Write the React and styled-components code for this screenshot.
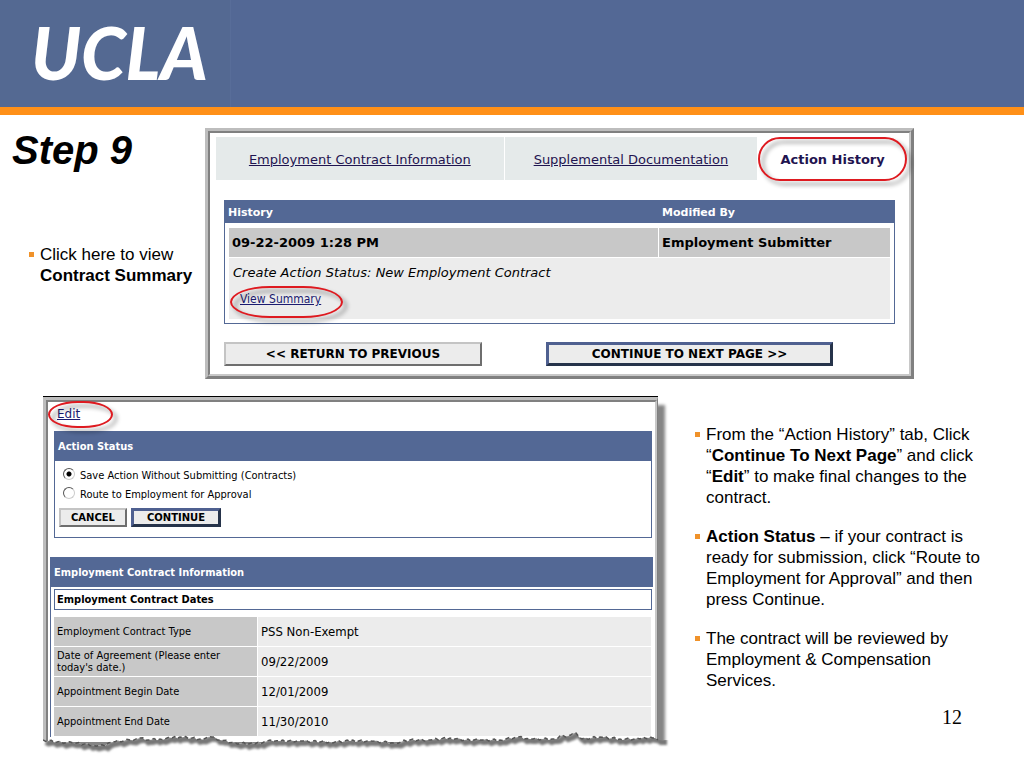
import styled, { createGlobalStyle, css } from 'styled-components';

const GlobalStyle = createGlobalStyle`
  * {
    box-sizing: border-box;
  }
  body {
    margin: 0;
    background: #fff;
    color: #000;
    font-family: "Liberation Sans", Arial, sans-serif;
  }
`;

const formFont = '"DejaVu Sans Condensed", Tahoma, "DejaVu Sans", sans-serif';
const wideFont = '"DejaVu Sans", Verdana, sans-serif';
const blue = '#536895';

const Header = styled.header`
  display: flex;
  height: 115px;
  background: ${blue};
  border-bottom: 8px solid #ff9018;
`;

const Brand = styled.div`
  width: 231px;
  padding-left: 31px;
  background: #546992;
  border-right: 1px solid #586d99;
  color: #fff;
  font: italic 900 72px/104px Lato, sans-serif;
`;

const TopSection = styled.section`
  display: grid;
  grid-template-columns: 205px minmax(0, 1fr);
  padding: 13px 110px 0 0;
`;

const StepTitle = styled.h1`
  margin: 0 0 72px 12px;
  font: italic bold 40px/44px "Liberation Sans", Arial, sans-serif;
`;

const Notes = styled.ul`
  display: flex;
  flex-direction: column;
  gap: 18px;
  margin: 0;
  padding: 0 0 0 ${({ $indent }) => $indent}px;
  list-style: none;
  font-size: 17px;
  line-height: 21px;
`;

const Note = styled.li`
  display: grid;
  grid-template-columns: 11px minmax(0, 1fr);

  &::before {
    content: '';
    width: 5px;
    height: 5px;
    margin-top: 8px;
    background: #f0922a;
  }
`;

const Frame = styled.div`
  border: 3px solid;
  border-color: #bdbdbd #808080 #808080 #bdbdbd;
`;

const FrameInner = styled.div`
  border: 2px solid;
  border-color: #808080 #c8c8c8 #c8c8c8 #808080;
  padding: ${({ $padding }) => $padding};
`;

const Tabs = styled.nav`
  display: flex;
  gap: 1px;
  margin-bottom: 20px;
`;

const Tab = styled.a`
  flex: ${({ $grow }) => $grow} 1 0;
  height: 43px;
  background: ${({ $active }) => ($active ? '#fff' : '#e5eaea')};
  color: #1f1450;
  font: ${({ $active }) => ($active ? 'bold' : 'normal')} 13px/45px ${wideFont};
  text-align: center;
  text-decoration: ${({ $active }) => ($active ? 'none' : 'underline')};
  white-space: nowrap;
`;

const ringed = css`
  position: relative;

  &::after {
    content: '';
    position: absolute;
    border: 2px solid #de1a20;
    border-radius: 50px;
    filter: drop-shadow(4px 4px 2px rgba(0, 0, 0, 0.45));
    pointer-events: none;
  }
`;

const RingedTab = styled(Tab)`
  ${ringed}
  &::after {
    inset: 0 0 -1px;
  }
`;

const SummaryLink = styled.a`
  ${ringed}
  margin-left: 7px;
  color: #1b1b70;
  font: 12px/16px ${formFont};

  &::after {
    inset: -6px -22px -12px -10px;
    border-radius: 35%/50%;
  }
`;

const EditLink = styled.a`
  ${ringed}
  display: inline-block;
  margin-left: 8px;
  color: #1b1b70;
  font: 12px/16px ${wideFont};

  &::after {
    inset: -5px -33px -6px -9px;
    border-radius: 45%/50%;
  }
`;

const HistoryArea = styled.div`
  padding: 0 12px 0 8px;
`;

const HistoryTable = styled.table`
  width: 100%;
  border: 1px solid ${blue};
  border-top: 0;
  border-spacing: 0;
  table-layout: fixed;
`;

const HistoryHead = styled.th`
  height: 23px;
  padding: 2px 4px 0 3px;
  background: ${blue};
  color: #fff;
  font: bold 11px/20px ${wideFont};
  text-align: left;

  &:first-child {
    width: 434px;
  }
`;

const HistoryCell = styled.td`
  height: 34px;
  padding: 0 3px;
  background: #c8c8c8;
  border-top: 5px solid #fff;
  border-right: ${({ $last }) => ($last ? 4 : 1)}px solid #fff;
  border-left: ${({ $last }) => ($last ? 0 : 4)}px solid #fff;
  font: bold 13px/20px ${wideFont};
`;

const HistoryDetail = styled.td`
  height: 66px;
  padding: 6px 4px 4px;
  background: #ececec;
  border: 4px solid #fff;
  border-top-width: 1px;
  font: italic 13px/18px ${wideFont};
  vertical-align: top;
`;

const DetailText = styled.p`
  margin: 0 0 8px;
`;

const ButtonRow = styled.div`
  display: flex;
  gap: ${({ $gap }) => $gap}px;
  margin: ${({ $margin }) => $margin};
`;

const FormButton = styled.button`
  width: ${({ $width }) => $width}px;
  height: ${({ $tall }) => ($tall ? 24 : 19)}px;
  padding: 0;
  background: #ececec;
  border: 2px solid;
  border-color: #c4c4c4 #6e6e6e #6e6e6e #c4c4c4;
  color: #000;
  font: bold ${({ $tall }) => ($tall ? 12 : 10)}px/14px ${wideFont};
  white-space: nowrap;

  ${({ $primary }) =>
    $primary &&
    css`
      border-color: #4f6090 #26334a #26334a #4f6090;
      border-width: 3px;
    `}
`;

const BottomSection = styled.section`
  display: grid;
  grid-template-columns: minmax(0, 1fr) 366px;
  padding: 17px 0 8px 43px;
`;

const TornSheet = styled.div`
  position: relative;
  height: 362px;
  border-top: 1px solid #000;
`;

const SheetBody = styled(Frame)`
  height: 345px;
  border-width: 3px 1px 0 3px;
  box-shadow: 8px 7px 3px -1px #858585;
`;

const SheetInner = styled(FrameInner)`
  height: 100%;
  border-bottom: 0;
  background: #fff;
`;

const TornEdge = styled.svg`
  position: absolute;
  left: 0;
  bottom: 0;
  width: calc(100% + 14px);
  height: 28px;
`;

const Bar = styled.h2`
  margin: 0;
  height: 30px;
  padding-left: 3px;
  background: ${blue};
  color: #fff;
  font: bold 11px/32px ${formFont};
`;

const StatusBox = styled.form`
  margin: 9px 3px 19px 5px;
  height: 107px;
  border: 1px solid ${blue};
  border-top: 0;
`;

const Choices = styled.div`
  padding: 5px 0 0 8px;
`;

const Choice = styled.label`
  display: flex;
  align-items: center;
  gap: 5px;
  height: 19px;
  font: 11px/14px ${formFont};
`;

const Radio = styled.input`
  appearance: none;
  width: 12px;
  height: 12px;
  margin: 0 0 4px;
  border: 1px solid;
  border-color: #555 #ccc #ccc #555;
  border-radius: 50%;
  background: #fff;

  &:checked {
    background: radial-gradient(circle, #000 0 2px, #fff 3px);
  }
`;

const ContractBox = styled.div`
  margin: 0 2px 0 1px;
  border-left: 1px solid ${blue};
`;

const SubTitle = styled.h3`
  margin: 2px 1px 6px 3px;
  height: 21px;
  padding-left: 2px;
  border: 1px solid ${blue};
  font: bold 11px/20px ${formFont};
`;

const DatesTable = styled.table`
  width: calc(100% - 5px);
  margin-left: 3px;
  border-spacing: 0 1px;
  table-layout: fixed;
`;

const DateLabel = styled.th`
  width: 204px;
  height: 29px;
  padding: 1px 24px 0 3px;
  background: #c8c8c8;
  border-right: 1px solid #fff;
  font: 11px/12px ${formFont};
  text-align: left;
`;

const DateValue = styled.td`
  padding: 1px 3px 0;
  background: #ececec;
  font: 13px/16px ${formFont};
`;

const SideColumn = styled.div`
  display: flex;
  flex-direction: column;
  justify-content: space-between;
  padding: 28px 40px 29px 0;
`;

const PageNumber = styled.div`
  padding-right: 22px;
  font: 20px/24px "Liberation Serif", "Times New Roman", serif;
  text-align: right;
`;

const dates = [
  ['Employment Contract Type', 'PSS Non-Exempt'],
  ["Date of Agreement (Please enter today's date.)", '09/22/2009'],
  ['Appointment Begin Date', '12/01/2009'],
  ['Appointment End Date', '11/30/2010'],
];

// x, y pairs along the ripped bottom of the sheet
const tear = [
  [0, 10], [14, 12], [30, 13], [50, 15], [62, 16], [69, 12], [87, 10], [97, 8], [105, 10],
  [117, 9], [129, 8], [137, 7], [157, 9], [169, 7], [177, 10], [192, 13], [212, 14], [221, 12],
  [227, 10], [237, 11], [257, 11], [287, 12], [307, 11], [327, 11], [352, 13], [367, 10],
  [387, 10], [407, 8], [422, 10], [437, 10], [457, 10], [475, 7], [487, 9], [512, 9], [517, 6],
  [525, 6], [533, 3], [539, 9], [557, 7], [577, 9], [597, 9], [607, 7], [615, 10],
];

const jagged = () => {
  const points = [];
  tear.slice(0, -1).forEach(([x, y], i) => {
    const [nx, ny] = tear[i + 1];
    const steps = Math.max(1, Math.round((nx - x) / 3));
    for (let s = 0; s < steps; s += 1) {
      const bump = s === 0 ? 0 : ((i * 7 + s * 5) % 3) - 1;
      points.push(`${x + ((nx - x) * s) / steps} ${y + ((ny - y) * s) / steps + bump}`);
    }
  });
  points.push('615 10');
  return points.join(' L');
};

const Tear = () => {
  const line = jagged();
  return (
    <TornEdge viewBox="0 0 629 28" preserveAspectRatio="none" aria-hidden="true">
      <defs>
        <clipPath id="below">
          <path d={`M${line} L629 10 V28 H0 Z`} />
        </clipPath>
        <filter id="soft" x="-5%" y="-80%" width="110%" height="300%">
          <feGaussianBlur stdDeviation="1.3" />
        </filter>
      </defs>
      <g clipPath="url(#below)">
        <rect width="629" height="28" fill="#fff" />
        <path d={`M${line} L621 10`} transform="translate(3 2)" fill="none" stroke="#777" strokeWidth="6" filter="url(#soft)" />
      </g>
      <path d={`M${line}`} fill="none" stroke="#555" strokeWidth="1.5" strokeDasharray="4 3" />
    </TornEdge>
  );
};

const HistoryPanel = () => (
  <Frame>
    <FrameInner $padding="4px 2px 8px 6px">
      <Tabs>
        <Tab href="#contract" $grow={288}>Employment Contract Information</Tab>
        <Tab href="#documents" $grow={253}>Supplemental Documentation</Tab>
        <RingedTab href="#history" $grow={149} $active>Action History</RingedTab>
      </Tabs>
      <HistoryArea>
        <HistoryTable>
          <thead>
            <tr>
              <HistoryHead>History</HistoryHead>
              <HistoryHead>Modified By</HistoryHead>
            </tr>
          </thead>
          <tbody>
            <tr>
              <HistoryCell>09-22-2009 1:28 PM</HistoryCell>
              <HistoryCell $last>Employment Submitter</HistoryCell>
            </tr>
            <tr>
              <HistoryDetail colSpan={2}>
                <DetailText>Create Action Status: New Employment Contract</DetailText>
                <SummaryLink href="#summary">View Summary</SummaryLink>
              </HistoryDetail>
            </tr>
          </tbody>
        </HistoryTable>
        <ButtonRow $gap={64} $margin="18px 0 0">
          <FormButton type="button" $width={258} $tall>&lt;&lt; RETURN TO PREVIOUS</FormButton>
          <FormButton type="button" $width={287} $tall $primary>CONTINUE TO NEXT PAGE &gt;&gt;</FormButton>
        </ButtonRow>
      </HistoryArea>
    </FrameInner>
  </Frame>
);

const ContractPanel = () => (
  <TornSheet>
    <SheetBody>
      <SheetInner $padding="2px 0 0 1px">
        <EditLink href="#edit">Edit</EditLink>
        <StatusBox>
          <Bar>Action Status</Bar>
          <Choices>
            <Choice>
              <Radio type="radio" name="status" defaultChecked />
              Save Action Without Submitting (Contracts)
            </Choice>
            <Choice>
              <Radio type="radio" name="status" />
              Route to Employment for Approval
            </Choice>
          </Choices>
          <ButtonRow $gap={4} $margin="4px 0 0 4px">
            <FormButton type="button" $width={68}>CANCEL</FormButton>
            <FormButton type="button" $width={90} $primary>CONTINUE</FormButton>
          </ButtonRow>
        </StatusBox>
        <ContractBox>
          <Bar>Employment Contract Information</Bar>
          <SubTitle>Employment Contract Dates</SubTitle>
          <DatesTable>
            <tbody>
              {dates.map(([label, value]) => (
                <tr key={label}>
                  <DateLabel scope="row">{label}</DateLabel>
                  <DateValue>{value}</DateValue>
                </tr>
              ))}
            </tbody>
          </DatesTable>
        </ContractBox>
      </SheetInner>
    </SheetBody>
    <Tear />
  </TornSheet>
);

const App = () => {
  return (
    <>
      <GlobalStyle />
      <Header>
        <Brand>UCLA</Brand>
      </Header>
      <main>
        <TopSection>
          <div>
            <StepTitle>Step 9</StepTitle>
            <Notes $indent={29}>
              <Note>
                <span>Click here to view <b>Contract Summary</b></span>
              </Note>
            </Notes>
          </div>
          <HistoryPanel />
        </TopSection>
        <BottomSection>
          <ContractPanel />
          <SideColumn>
            <Notes $indent={37}>
              <Note>
                <span>
                  From the “Action History” tab, Click “<b>Continue To Next Page</b>” and click “<b>Edit</b>” to
                  make final changes to the contract.
                </span>
              </Note>
              <Note>
                <span>
                  <b>Action Status</b> – if your contract is ready for submission, click “Route to Employment for
                  Approval” and then press Continue.
                </span>
              </Note>
              <Note>
                <span>The contract will be reviewed by Employment &amp; Compensation Services.</span>
              </Note>
            </Notes>
            <PageNumber>12</PageNumber>
          </SideColumn>
        </BottomSection>
      </main>
    </>
  );
};

export default App;
